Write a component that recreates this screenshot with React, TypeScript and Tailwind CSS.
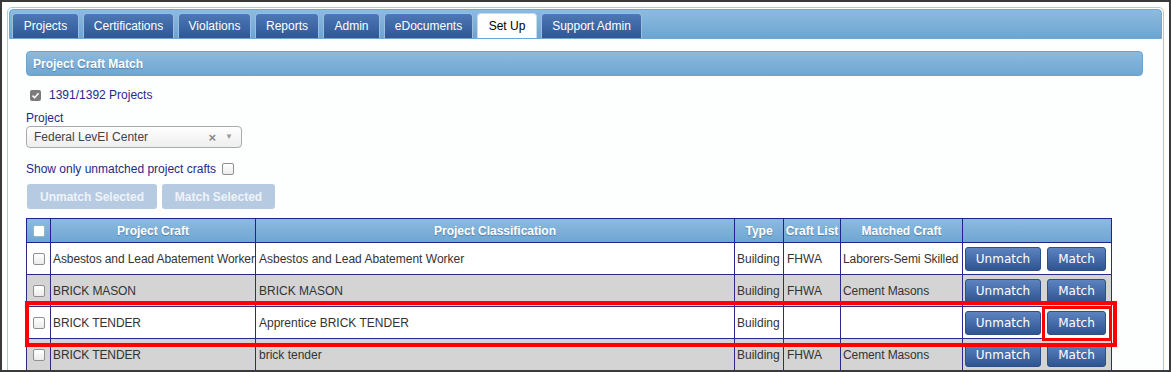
const tabs = [
  { label: "Projects", w: "w-[67px]" },
  { label: "Certifications", w: "w-[91px]" },
  { label: "Violations", w: "w-[73px]" },
  { label: "Reports", w: "w-[64px]" },
  { label: "Admin", w: "w-[57px]" },
  { label: "eDocuments", w: "w-[89px]" },
  { label: "Set Up", w: "w-[60px]", active: true },
  { label: "Support Admin", w: "w-[101px]" },
];

const rows = [
  { craft: "Asbestos and Lead Abatement Worker", cls: "Asbestos and Lead Abatement Worker", type: "Building", list: "FHWA", matched: "Laborers-Semi Skilled" },
  { craft: "BRICK MASON", cls: "BRICK MASON", type: "Building", list: "FHWA", matched: "Cement Masons" },
  { craft: "BRICK TENDER", cls: "Apprentice BRICK TENDER", type: "Building", list: "", matched: "" },
  { craft: "BRICK TENDER", cls: "brick tender", type: "Building", list: "FHWA", matched: "Cement Masons" },
];

function Box({ className = "" }: { className?: string }) {
  return (
    <span
      className={`inline-block w-[12px] h-[12px] rounded-[2px] border border-[#8f8f8f] bg-gradient-to-b from-white to-[#ececec] ${className}`}
    />
  );
}

function RowButton({ label, w }: { label: string; w: string }) {
  return (
    <button
      className={`${w} h-[24px] rounded-[3px] border border-[#2c4f86] bg-gradient-to-b from-[#5d84bf] to-[#2e5592] text-white text-[12px] font-['DejaVu_Sans',Verdana,sans-serif] leading-none`}
    >
      {label}
    </button>
  );
}

export default function App() {
  return (
    <div className="w-[1171px] h-[372px] overflow-hidden bg-white border-2 border-[#3a3a3a] p-[5px] font-['Liberation_Sans',Arial,sans-serif]">
      <div className="h-[420px] border border-[#a9cbe7] rounded-[5px] p-px bg-[#fdfefe]">
        {/* Tab bar */}
        <div className="h-[30px] rounded-t-[4px] border border-[#6fa6d3] bg-gradient-to-b from-[#8dbbdf] to-[#6ca5d2] flex items-end pl-[2px] gap-[4px]">
          {tabs.map((t) =>
            t.active ? (
              <div
                key={t.label}
                className={`${t.w} h-[25px] rounded-t-[4px] bg-white border border-b-0 border-[#c9dcee] flex items-center justify-center text-[12px] text-black`}
              >
                {t.label}
              </div>
            ) : (
              <div
                key={t.label}
                className={`${t.w} h-[25px] rounded-t-[4px] border border-b-0 border-[#9cbde0] bg-gradient-to-b from-[#4d79b5] to-[#2f5796] flex items-center justify-center text-[12px] text-white`}
              >
                {t.label}
              </div>
            )
          )}
        </div>

        <div className="pl-[17px] pr-[19px]">
          {/* Section header */}
          <div className="mt-[12px] h-[25px] rounded-[4px] border border-[#6aa3d0] bg-gradient-to-b from-[#8cbade] to-[#6ea6d3] flex items-center pl-[6px] text-[12px] font-bold text-white [text-shadow:0_1px_1px_rgba(40,70,110,0.45)]">
            Project Craft Match
          </div>

          <div className="mt-[12px] h-[14px] flex items-center pl-[4px] gap-[8px] text-[12px] text-[#28288a]">
            <span className="w-[11px] h-[11px] rounded-[2px] bg-[#7b7b7b] flex items-center justify-center">
              <svg width="9" height="9" viewBox="0 0 9 9">
                <path d="M1.5 4.6 L3.6 6.7 L7.6 2.2" stroke="white" strokeWidth="1.6" fill="none" />
              </svg>
            </span>
            <span>1391/1392 Projects</span>
          </div>

          <div className="mt-[9px] h-[14px] leading-[14px] text-[12px] text-[#28288a]">Project</div>

          <div className="mt-px w-[216px] h-[22px] rounded-[4px] border border-[#aaaaaa] bg-gradient-to-b from-white to-[#eeeeee] flex items-center pl-[7px] pr-[8px] text-[12px] text-[#444]">
            <span className="flex-1">Federal LevEI Center</span>
            <span className="text-[#8a8a8a] font-bold text-[13px] leading-none mr-[9px]">×</span>
            <span className="text-[#9a9a9a] text-[8px] leading-none">▼</span>
          </div>

          <div className="mt-[14px] h-[14px] flex items-center gap-[6px] text-[12px] text-[#28288a]">
            <span>Show only unmatched project crafts</span>
            <Box />
          </div>

          <div className="mt-[8px] flex gap-[5px] pl-px">
            <button className="w-[130px] h-[25px] rounded-[3px] bg-[#b6cbe1] text-[#eef3f9] text-[12px] font-bold">
              Unmatch Selected
            </button>
            <button className="w-[113px] h-[25px] rounded-[3px] bg-[#b6cbe1] text-[#eef3f9] text-[12px] font-bold">
              Match Selected
            </button>
          </div>

          {/* Table */}
          <div className="relative mt-[9px] w-[1085px]">
            <table className="border-collapse table-fixed w-[1085px] text-[12px] text-[#333]">
              <colgroup>
                <col className="w-[24px]" />
                <col className="w-[205px]" />
                <col className="w-[479px]" />
                <col className="w-[49px]" />
                <col className="w-[57px]" />
                <col className="w-[122px]" />
                <col className="w-[149px]" />
              </colgroup>
              <thead>
                <tr className="h-[24px] bg-gradient-to-b from-[#8dbbdf] to-[#6ca5d2] text-white font-bold [text-shadow:0_1px_1px_rgba(40,70,110,0.45)]">
                  <th className="border border-[#22228a] p-0">
                    <span className="inline-block w-[12px] h-[12px] rounded-[2px] bg-white border border-[#9bb] align-middle" />
                  </th>
                  <th className="border border-[#22228a] p-0">Project Craft</th>
                  <th className="border border-[#22228a] p-0">Project Classification</th>
                  <th className="border border-[#22228a] p-0">Type</th>
                  <th className="border border-[#22228a] p-0">Craft List</th>
                  <th className="border border-[#22228a] p-0">Matched Craft</th>
                  <th className="border border-[#22228a] p-0"></th>
                </tr>
              </thead>
              <tbody>
                {rows.map((r, i) => (
                  <tr key={i} className={`h-[32px] ${i % 2 === 1 ? "bg-[#d4d4d4]" : "bg-white"}`}>
                    <td className="border border-[#2a2a8c] p-0 text-center">
                      <Box className="align-middle" />
                    </td>
                    <td className="border border-[#2a2a8c] pl-[2px] pr-0 whitespace-nowrap tracking-[-0.1px]">{r.craft}</td>
                    <td className="border border-[#2a2a8c] pl-[3px] whitespace-nowrap">{r.cls}</td>
                    <td className="border border-[#2a2a8c] pl-[2px] pr-0 whitespace-nowrap">{r.type}</td>
                    <td className="border border-[#2a2a8c] pl-[3px]">{r.list}</td>
                    <td className="border border-[#2a2a8c] pl-[2px] pr-0 whitespace-nowrap tracking-[-0.1px]">{r.matched}</td>
                    <td className="border border-[#2a2a8c] p-0">
                      <div className="flex gap-[6px] pl-[2px]">
                        <RowButton label="Unmatch" w="w-[76px]" />
                        <RowButton label="Match" w="w-[59px]" />
                      </div>
                    </td>
                  </tr>
                ))}
              </tbody>
            </table>

            {/* highlight boxes */}
            <div className="absolute left-[-1px] top-[83px] w-[1092px] h-[46px] border-[4px] border-[#ff0000] pointer-events-none" />
            <div className="absolute left-[1016px] top-[88px] w-[70px] h-[35px] border-[3px] border-[#ff0000] pointer-events-none" />
          </div>
        </div>
      </div>
    </div>
  );
}
